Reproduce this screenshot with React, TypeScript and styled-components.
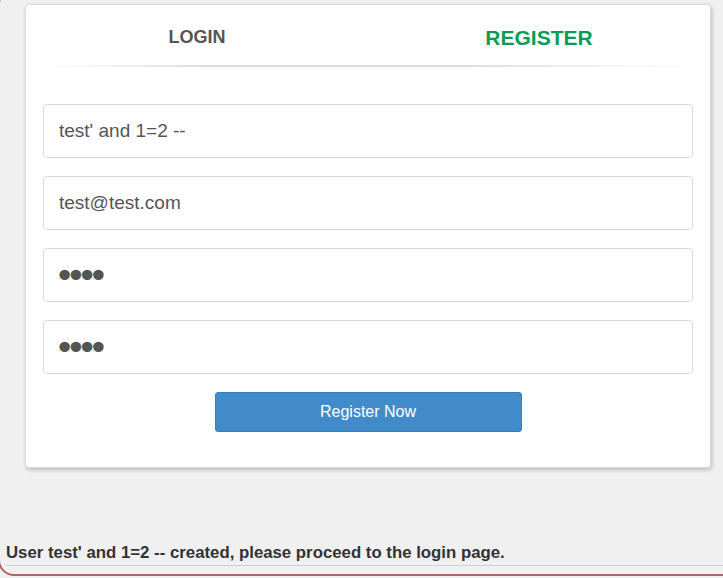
import styled, { createGlobalStyle } from "styled-components";

const GlobalStyle = createGlobalStyle`
  html, body {
    margin: 0;
    padding: 0;
    background: #f0f0f0;
    overflow: hidden;
  }
  body {
    font-family: "Liberation Sans", Arial, sans-serif;
    color: #333;
  }
`;

const Frame = styled.div`
  margin: -12px 0 0 -2px;
  width: 760px;
  border: 2px solid #b06464;
  border-radius: 16px;
  padding: 14px 0 8px 6px;
  box-sizing: border-box;
`;

const Card = styled.div`
  margin-left: 19px;
  width: 686px;
  box-sizing: border-box;
  background: #fff;
  border: 1px solid #dcdcdc;
  border-radius: 4px;
  box-shadow: 1px 2px 4px rgba(0, 0, 0, 0.22);
  padding-bottom: 35px;
`;

const Tabs = styled.div`
  display: flex;
  height: 62px;
  position: relative;
  &::after {
    content: "";
    position: absolute;
    left: 20px;
    right: 20px;
    bottom: 0;
    height: 2px;
    background: linear-gradient(
      to right,
      rgba(221, 221, 221, 0),
      #dedede 25%,
      #dedede 65%,
      rgba(221, 221, 221, 0)
    );
  }
`;

const Tab = styled.div<{ $active?: boolean }>`
  flex: 1;
  display: flex;
  justify-content: center;
  align-items: center;
  padding-top: ${(p) => (p.$active ? "4px" : "2px")};
  font-weight: bold;
  font-size: ${(p) => (p.$active ? "21px" : "18px")};
  color: ${(p) => (p.$active ? "#0a9b55" : "#555")};
  cursor: pointer;
`;

const Form = styled.form`
  display: flex;
  flex-direction: column;
  align-items: center;
  gap: 18px;
  padding: 37px 18px 0;
`;

const Field = styled.input`
  width: 650px;
  height: 54px;
  box-sizing: border-box;
  border: 1px solid #dadada;
  border-radius: 4px;
  padding: 0 15px;
  font-family: "Liberation Sans", Arial, sans-serif;
  font-size: 19px;
  color: #555;
  outline: none;
  &[type="password"] {
    padding-left: 10px;
    font-family: "DejaVu Sans", sans-serif;
    font-size: 36px;
    letter-spacing: -10px;
  }
`;

const Button = styled.button`
  width: 307px;
  height: 40px;
  background: #428bca;
  border: 1px solid #357ebd;
  border-radius: 3px;
  color: #fff;
  font-family: "Liberation Sans", Arial, sans-serif;
  font-size: 16px;
`;

const Message = styled.p`
  margin: 74px 0 0 0;
  padding-bottom: 2px;
  border-bottom: 1px solid #cfcfcf;
  font-weight: bold;
  font-size: 16.8px;
  line-height: 21px;
  color: #333;
`;

export default function App() {
  return (
    <>
      <GlobalStyle />
      <Frame>
        <Card>
          <Tabs>
            <Tab>LOGIN</Tab>
            <Tab $active>REGISTER</Tab>
          </Tabs>
          <Form onSubmit={(e) => e.preventDefault()}>
            <Field type="text" defaultValue="test' and 1=2 --" />
            <Field type="email" defaultValue="test@test.com" />
            <Field type="password" defaultValue="test" />
            <Field type="password" defaultValue="test" />
            <Button type="submit">Register Now</Button>
          </Form>
        </Card>
        <Message>User test' and 1=2 -- created, please proceed to the login page.</Message>
      </Frame>
    </>
  );
}
